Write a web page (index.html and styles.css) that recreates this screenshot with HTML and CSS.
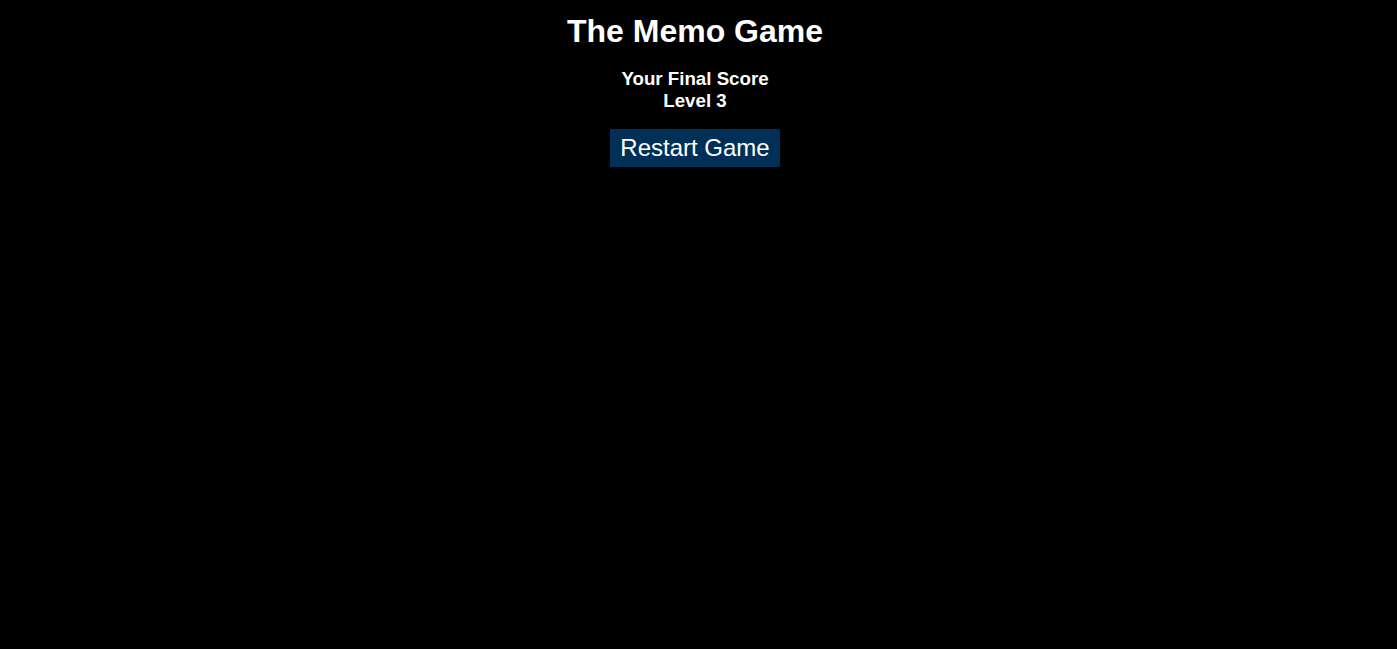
FILE: index.html
```html
<!DOCTYPE html>
<html lang="en">
<head>
<meta charset="utf-8">
<title>The Memo Game</title>
<link rel="stylesheet" href="styles.css">
</head>
<body>
<main class="game">
  <h1 class="title">The Memo Game</h1>
  <h3 class="score">Your Final Score<br>Level 3</h3>
  <button class="restart" type="button">Restart Game</button>
</main>
</body>
</html>
```
FILE: styles.css
```css
html, body {
  margin: 0;
  padding: 0;
  background: #000;
  color: #fff;
  font-family: "Liberation Sans", Arial, sans-serif;
}
.game {
  display: flex;
  flex-direction: column;
  align-items: center;
  text-align: center;
  padding: 13px 7px 0 0;
}
.title {
  margin: 0 0 18px;
  font-size: 32px;
  font-weight: bold;
}
.score {
  margin: 0 0 17px;
  font-size: 18.72px;
  font-weight: bold;
}
.restart {
  background: #003057;
  color: #fff;
  border: none;
  font-family: "Liberation Sans", Arial, sans-serif;
  font-size: 24px;
  padding: 5px 10px;
  margin: 0;
  cursor: pointer;
}
```
